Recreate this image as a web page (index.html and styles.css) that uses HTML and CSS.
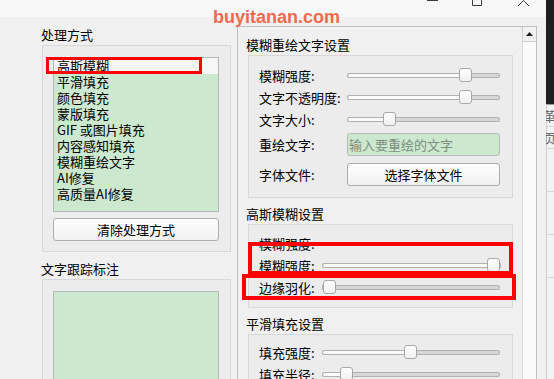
FILE: index.html
```html
<!DOCTYPE html>
<html lang="zh-CN">
<head>
<meta charset="utf-8">
<title>处理方式</title>
<link rel="stylesheet" href="styles.css">
</head>
<body>
<div class="screen">
  <div class="window">
    <div class="titlebar">
      <svg class="ctl ctl-min" width="11" height="6" viewBox="0 0 11 6"><path d="M0 0.5H11" fill="none" stroke="#3a3a3a" stroke-width="1"/></svg>
      <svg class="ctl ctl-max" width="10" height="6" viewBox="0 0 10 6"><path d="M0.5 0V5.5H9.5V0" fill="none" stroke="#3a3a3a" stroke-width="1"/></svg>
      <svg class="ctl ctl-close" width="11" height="6" viewBox="0 0 11 6"><path d="M0 6L5.5 0.5L11 6" fill="none" stroke="#3a3a3a" stroke-width="1"/></svg>
    </div>
    <div class="main">
      <div class="left">
        <div class="group">
          <div class="gtitle">处理方式</div>
          <div class="gframe lframe1">
            <ul class="list">
              <li class="sel">高斯模糊</li>
              <li>平滑填充</li>
              <li>颜色填充</li>
              <li>蒙版填充</li>
              <li>GIF 或图片填充</li>
              <li>内容感知填充</li>
              <li>模糊重绘文字</li>
              <li>AI修复</li>
              <li>高质量AI修复</li>
            </ul>
            <button class="btn btn-clear">清除处理方式</button>
          </div>
        </div>
        <div class="group lgroup2">
          <div class="gtitle">文字跟踪标注</div>
          <div class="gframe lframe2"><div class="greenbox"></div></div>
        </div>
      </div>
      <div class="scrollarea">
        <div class="viewport">
          <div class="rgroup">
            <div class="gtitle rtitle">模糊重绘文字设置</div>
            <div class="gframe rframe1">
              <div class="row"><span class="lbl">模糊强度:</span><div class="slider"><div class="fill" style="width:112px"></div><div class="knob"></div><div class="rest"></div></div></div>
              <div class="row"><span class="lbl">文字不透明度:</span><div class="slider"><div class="fill" style="width:112px"></div><div class="knob"></div><div class="rest"></div></div></div>
              <div class="row"><span class="lbl">文字大小:</span><div class="slider"><div class="fill" style="width:36px"></div><div class="knob"></div><div class="rest"></div></div></div>
              <div class="row row-field"><span class="lbl">重绘文字:</span><input class="field" type="text" placeholder="输入要重绘的文字"></div>
              <div class="row row-btn"><span class="lbl">字体文件:</span><button class="btn btn-font">选择字体文件</button></div>
            </div>
          </div>
          <div class="rgroup rgroup2">
            <div class="gtitle rtitle">高斯模糊设置</div>
            <div class="gframe rframe2">
              <div class="row"><span class="lbl lbl-s">模糊强度:</span></div>
              <div class="row"><span class="lbl lbl-s">模糊强度:</span><div class="slider"><div class="fill" style="width:165px"></div><div class="knob"></div><div class="rest"></div></div></div>
              <div class="row"><span class="lbl lbl-s">边缘羽化:</span><div class="slider"><div class="fill fill-zero"></div><div class="knob"></div><div class="rest"></div></div></div>
            </div>
          </div>
          <div class="rgroup rgroup3">
            <div class="gtitle rtitle">平滑填充设置</div>
            <div class="gframe rframe3">
              <div class="row"><span class="lbl lbl-s">填充强度:</span><div class="slider"><div class="fill" style="width:82px"></div><div class="knob"></div><div class="rest"></div></div></div>
              <div class="row"><span class="lbl lbl-s">填充半径:</span><div class="slider"><div class="fill" style="width:18px"></div><div class="knob"></div><div class="rest"></div></div></div>
            </div>
          </div>
        </div>
        <div class="vscroll">
          <div class="sb-up"><svg width="7" height="4" viewBox="0 0 7 4"><path d="M0 4L3.5 0L7 4Z" fill="#202020"/></svg></div>
          <div class="sb-track"></div>
        </div>
      </div>
    </div>
  </div>
  <div class="outside">
    <div class="os-dark"></div>
    <div class="os-light">
      <div class="os-cell">革</div>
      <div class="os-cell">页</div>
      <div class="os-cell os-tall"></div>
      <div class="os-cell os-tall"></div>
      <div class="os-cell os-tall"></div>
    </div>
  </div>
</div>
<div class="watermark">buyitanan.com</div>
<div class="mark mark-list"></div>
<div class="mark mark-a"></div>
<div class="mark mark-b"></div>
</body>
</html>
```

FILE: styles.css
```css
html, body {
  margin: 0;
  padding: 0;
}

body {
  width: 554px;
  height: 379px;
  overflow: hidden;
  position: relative;
  background: #f0f0f0;
  font-family: "Noto Sans CJK SC", "Microsoft YaHei", sans-serif;
  font-size: 13px;
  color: #000;
}

.screen {
  display: flex;
  height: 379px;
}

.window {
  width: 546px;
  flex: none;
  display: flex;
  flex-direction: column;
  background: #f0f0f0;
}

.titlebar {
  height: 17px;
  flex: none;
  background: #f8f8f8;
  display: flex;
  align-items: flex-start;
}

.ctl { display: block; flex: none; }
.ctl-min { margin-left: 427px; }
.ctl-max { margin-left: 34px; }
.ctl-close { margin-left: 36px; }

.main {
  flex: 1;
  display: flex;
  min-height: 0;
}

/* left column */
.left {
  flex: none;
  width: 189px;
  padding-left: 42px;
  padding-top: 9px;
  margin-right: 6px;
}

.gtitle {
  height: 18px;
  line-height: 18px;
  margin-bottom: 1px;
  margin-left: -1px;
  white-space: nowrap;
}

.gframe {
  border: 1px solid #d8d8d8;
  background: #ececec;
}

.lframe1 {
  padding: 11px 11px 10px 10px;
}

.list {
  list-style: none;
  margin: 0;
  padding: 0;
  height: 155px;
  box-sizing: border-box;
  border: 1px solid #b6b6b6;
  background: #cce8cf;
}

.list li {
  height: 16px;
  line-height: 16px;
  padding-left: 3px;
  white-space: nowrap;
}

.list li.sel {
  background: #f6f6f6;
}

.btn {
  display: block;
  box-sizing: border-box;
  height: 23px;
  padding: 0;
  border: 1px solid #adadad;
  border-radius: 3px;
  background: linear-gradient(#fefefe, #f1f1f1);
  font-family: inherit;
  font-size: 13px;
  color: #000;
  line-height: 21px;
  text-align: center;
}

.btn-clear {
  width: 166px;
  margin-top: 6px;
}

.lgroup2 {
  margin-top: 8px;
}

.lframe2 {
  padding: 11px 11px 0 10px;
  height: 120px;
}

.greenbox {
  height: 130px;
  border: 1px solid #b8b8b8;
  background: #cce8cf;
}

/* right scroll area */
.scrollarea {
  flex: none;
  width: 298px;
  margin-top: 9px;
  border: 1px solid #bfbfbf;
  border-bottom: none;
  display: flex;
}

.viewport {
  flex: 1;
  min-width: 0;
  padding-top: 9px;
  overflow: hidden;
}

.rgroup {
  padding: 0 9px 0 10px;
}

.rtitle {
  margin-left: -2px;
}

.rgroup2 { margin-top: 7px; }
.rgroup3 { margin-top: 7px; }

.rframe1 { padding: 8px 12px 11px 10px; }
.rframe2 { padding: 7px 12px 9px 10px; }
.rframe3 { padding: 6px 12px 20px 10px; }

.row {
  display: flex;
  align-items: center;
  height: 22px;
}

.row-field {
  height: 23px;
  margin-top: 3px;
}

.row-btn {
  height: 23px;
  margin-top: 7px;
}

.lbl {
  flex: none;
  width: 88px;
  white-space: nowrap;
}

.lbl-s {
  width: 63px;
}

.slider {
  flex: 1;
  min-width: 0;
  height: 14px;
  display: flex;
  align-items: center;
}

.fill {
  flex: none;
  box-sizing: border-box;
  height: 5px;
  border: 1px solid #b0b0b0;
  border-right: none;
  border-radius: 3px 0 0 3px;
  background: #fbfbfb;
}

.fill-zero {
  width: 0;
}

.knob {
  flex: none;
  box-sizing: border-box;
  width: 13px;
  height: 14px;
  border: 1px solid #a8a8a8;
  border-radius: 3px;
  background: linear-gradient(#ffffff, #f0f0f0);
}

.rest {
  flex: 1;
  min-width: 0;
  box-sizing: border-box;
  height: 5px;
  border: 1px solid #b0b0b0;
  border-left: none;
  border-radius: 0 3px 3px 0;
  background: #d7d7d7;
}

.field {
  flex: 1;
  min-width: 0;
  box-sizing: border-box;
  height: 23px;
  margin: 0;
  padding: 0 0 0 1px;
  border: 1px solid #b8b8b8;
  border-radius: 3px;
  background: #cce8cf;
  font-family: inherit;
  font-size: 13px;
  color: #000;
  outline: none;
}

.field::placeholder {
  color: #7e8f81;
  opacity: 1;
}

.btn-font {
  flex: 1;
  min-width: 0;
}

/* scrollbar */
.vscroll {
  flex: none;
  width: 14px;
  display: flex;
  flex-direction: column;
}

.sb-up {
  height: 15px;
  box-sizing: border-box;
  border: 1px solid #cdcdcd;
  border-top: none;
  border-right: none;
  background: #f2f2f2;
  display: flex;
  align-items: center;
  justify-content: center;
}

.sb-up svg { display: block; }

.sb-track {
  flex: 1;
  box-sizing: border-box;
  border-left: 1px solid #dadada;
  background: #fafafa;
}

/* content outside the window */
.outside {
  flex: 1;
  display: flex;
  flex-direction: column;
  overflow: hidden;
}

.os-dark {
  height: 104px;
  flex: none;
  background: #1e1e1e;
}

.os-light {
  flex: 1;
  background: #f3f3f3;
  border-top: 1px solid #9a9a9a;
  border-left: 1px solid #cfcfcf;
}

.os-cell {
  height: 21px;
  line-height: 21px;
  font-size: 13px;
  color: #666;
  border-bottom: 1px solid #d4d4d4;
  white-space: nowrap;
  margin-left: -4px;
}

.os-tall {
  height: 42px;
}

/* overlays */
.watermark {
  position: absolute;
  left: 213px;
  top: 8px;
  font-family: "Liberation Sans", Arial, sans-serif;
  font-weight: bold;
  font-size: 18px;
  line-height: 18px;
  color: #f06a50;
  white-space: nowrap;
}

.mark {
  position: absolute;
  box-sizing: border-box;
  border: 4px solid #ff0000;
}

.mark-list {
  left: 46px;
  top: 57px;
  width: 156px;
  height: 17px;
  border-width: 3px;
}

.mark-a {
  left: 248px;
  top: 242px;
  width: 265px;
  height: 33px;
}

.mark-b {
  left: 242px;
  top: 274px;
  width: 274px;
  height: 26px;
}
```
